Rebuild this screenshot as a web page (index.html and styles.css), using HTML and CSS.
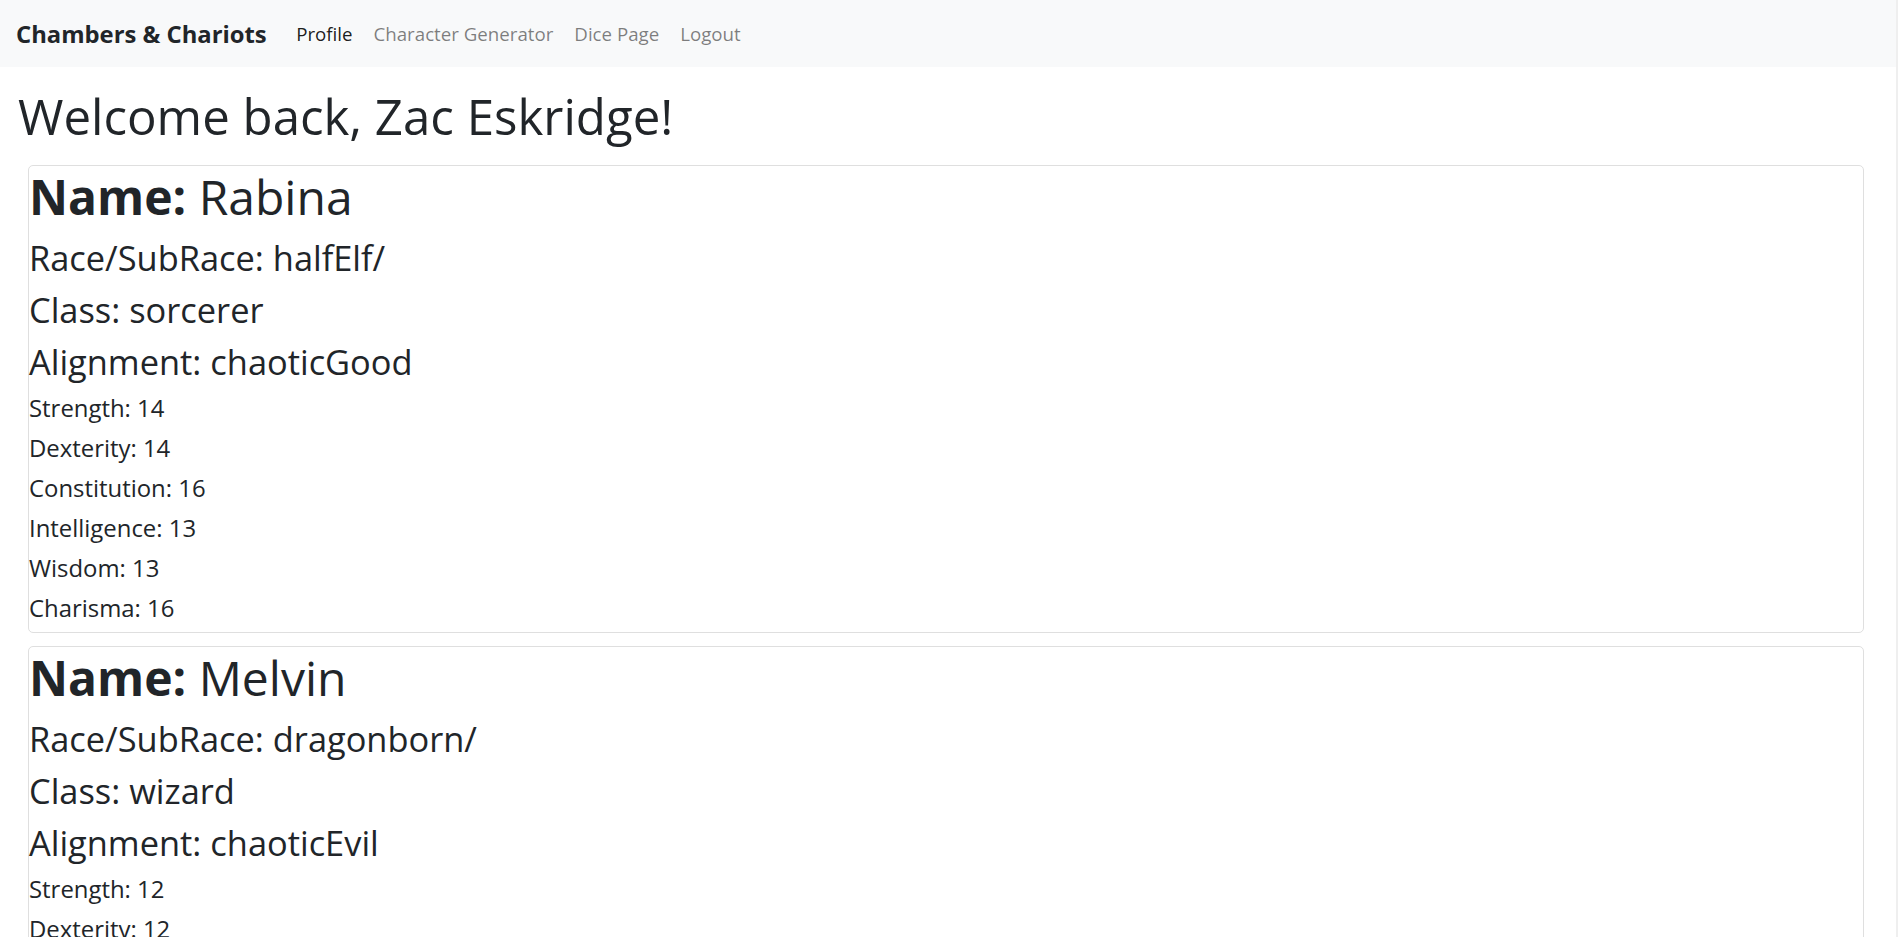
FILE: index.html
```html
<!DOCTYPE html>
<html lang="en">
<head>
<meta charset="utf-8">
<title>Chambers &amp; Chariots</title>
<link rel="stylesheet" href="styles.css">
</head>
<body>
<nav class="navbar">
  <a class="brand" href="#">Chambers &amp; Chariots</a>
  <ul class="nav">
    <li><a class="nav-link active" href="#">Profile</a></li>
    <li><a class="nav-link" href="#">Character Generator</a></li>
    <li><a class="nav-link" href="#">Dice Page</a></li>
    <li><a class="nav-link" href="#">Logout</a></li>
  </ul>
</nav>
<main class="container">
  <h1 class="welcome">Welcome back, Zac Eskridge!</h1>
  <section class="char-list">
    <article class="card">
      <h2 class="char-name"><b>Name:</b> Rabina</h2>
      <h3 class="char-meta">Race/SubRace: halfElf/</h3>
      <h3 class="char-meta">Class: sorcerer</h3>
      <h3 class="char-meta">Alignment: chaoticGood</h3>
      <p class="stat">Strength: 14</p>
      <p class="stat">Dexterity: 14</p>
      <p class="stat">Constitution: 16</p>
      <p class="stat">Intelligence: 13</p>
      <p class="stat">Wisdom: 13</p>
      <p class="stat">Charisma: 16</p>
    </article>
    <article class="card">
      <h2 class="char-name"><b>Name:</b> Melvin</h2>
      <h3 class="char-meta">Race/SubRace: dragonborn/</h3>
      <h3 class="char-meta">Class: wizard</h3>
      <h3 class="char-meta">Alignment: chaoticEvil</h3>
      <p class="stat">Strength: 12</p>
      <p class="stat">Dexterity: 12</p>
      <p class="stat">Constitution: 14</p>
      <p class="stat">Intelligence: 17</p>
      <p class="stat">Wisdom: 12</p>
      <p class="stat">Charisma: 10</p>
    </article>
  </section>
</main>
<div class="scroll-edge"></div>
</body>
</html>
```
FILE: styles.css
```css
* { box-sizing: border-box; }
html, body { margin: 0; }
body {
  font-family: "Open Sans", "Noto Sans", sans-serif;
  color: #212529;
  background: #fff;
}
.navbar {
  display: flex;
  align-items: center;
  height: 67px;
  padding: 0 16px;
  background: #f8f9fa;
}
.brand {
  font-weight: 700;
  font-size: 23.8px;
  line-height: 30px;
  margin-top: 1px;
  margin-right: 19px;
  color: #212529;
  text-decoration: none;
}
.nav { display: flex; list-style: none; margin: 0; padding: 0; }
.nav-link {
  display: block;
  padding: 0 10.5px;
  font-size: 18.7px;
  line-height: 28px;
  color: rgba(0, 0, 0, .5);
  text-decoration: none;
}
.nav-link.active { color: rgba(0, 0, 0, .9); }
.container { padding: 0 18px; }
.welcome {
  margin: 19.4px 0 19.6px;
  font-weight: 400;
  font-size: 49.2px;
  line-height: 59px;
}
.char-list { margin: 0 16px 0 10px; }
.card {
  border: 1px solid #dfdfdf;
  border-radius: 5px;
  padding-bottom: 4px;
  margin-bottom: 13px;
}
.char-name {
  margin: 0 0 4px;
  font-size: 48px;
  font-weight: 400;
  line-height: 62px;
}
.char-name b { font-weight: 700; }
.char-meta {
  margin: 0;
  font-size: 34.4px;
  font-weight: 400;
  line-height: 52px;
}
.stat {
  margin: 0;
  font-size: 23.9px;
  line-height: 40px;
}
.scroll-edge {
  position: fixed;
  top: 0;
  right: 0;
  width: 2px;
  height: 100%;
  background: #efefef;
}
```
